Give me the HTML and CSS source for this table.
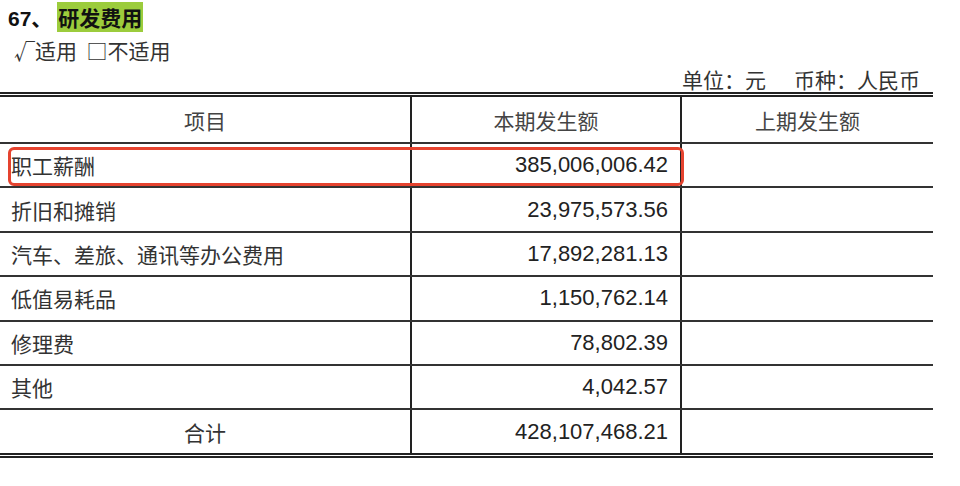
FILE: index.html
```html
<!DOCTYPE html>
<html lang="zh">
<head>
<meta charset="utf-8">
<link rel="stylesheet" href="styles.css">
</head>
<body>
<div class="page">
  <div class="title"><span class="num">67、</span> <span class="hl">研发费用</span></div>
  <div class="apply">√适用&nbsp;&nbsp;□不适用</div>
  <div class="unit">单位：元<span class="gap"></span>币种：人民币</div>
  <div class="table-wrap">
    <table class="tbl">
      <colgroup><col class="c1"><col class="c2"><col class="c3"></colgroup>
      <thead>
        <tr class="head"><th>项目</th><th>本期发生额</th><th>上期发生额</th></tr>
      </thead>
      <tbody>
        <tr><td class="name">职工薪酬</td><td class="amt">385,006,006.42</td><td></td></tr>
        <tr><td class="name">折旧和摊销</td><td class="amt">23,975,573.56</td><td></td></tr>
        <tr><td class="name">汽车、差旅、通讯等办公费用</td><td class="amt">17,892,281.13</td><td></td></tr>
        <tr><td class="name">低值易耗品</td><td class="amt">1,150,762.14</td><td></td></tr>
        <tr><td class="name">修理费</td><td class="amt">78,802.39</td><td></td></tr>
        <tr><td class="name">其他</td><td class="amt">4,042.57</td><td></td></tr>
        <tr class="total"><td class="center">合计</td><td class="amt">428,107,468.21</td><td></td></tr>
      </tbody>
    </table>
    <div class="mark"></div>
  </div>
</div>
</body>
</html>
```
FILE: styles.css
```css
html, body {
  margin: 0;
  padding: 0;
  background: #fff;
}
body {
  font-family: "Noto Sans CJK SC", "Liberation Sans", sans-serif;
  color: #333;
}
.page {
  width: 960px;
}
.title {
  height: 34px;
  line-height: 34px;
  padding-left: 8px;
  font-size: 21px;
  font-weight: bold;
  color: #111;
}
.title .num {
  font-family: "Liberation Sans", "Noto Sans CJK SC", sans-serif;
}
.title .hl {
  background: #9ccc3c;
  padding: 0 1px;
  font-family: "Noto Sans CJK SC", sans-serif;
}
.apply {
  height: 32px;
  line-height: 32px;
  padding-left: 14px;
  font-size: 21px;
  color: #333;
}
.unit {
  height: 26px;
  line-height: 26px;
  width: 920px;
  text-align: right;
  font-size: 21px;
  color: #333;
}
.unit .gap {
  display: inline-block;
  width: 28px;
}
.table-wrap {
  position: relative;
  width: 933px;
}
.tbl {
  width: 933px;
  border-collapse: collapse;
  table-layout: fixed;
  border-top: 5px double #222;
  border-bottom: 5px double #222;
  font-size: 21px;
}
.c1 { width: 411px; }
.c2 { width: 270px; }
.c3 { width: 252px; }
.tbl th, .tbl td {
  border-bottom: 2px solid #333;
  border-left: 2px solid #222;
  padding: 0;
  height: 42.4px;
  font-weight: normal;
  color: #333;
}
.tbl th:first-child, .tbl td:first-child {
  border-left: none;
}
.tbl th {
  height: 45px;
  text-align: center;
  color: #444;
}
.tbl .name {
  padding-left: 11px;
}
.tbl .center {
  text-align: center;
}
.tbl .amt {
  text-align: right;
  padding-right: 12px;
  font-family: "Liberation Sans", Arial, sans-serif;
  font-size: 22px;
  color: #222;
}
.tbl tr.total td {
  border-bottom: none;
}
.mark {
  position: absolute;
  left: 8px;
  top: 55px;
  width: 670px;
  height: 33px;
  border: 3px solid #e5432f;
  border-radius: 6px;
  pointer-events: none;
}
```
